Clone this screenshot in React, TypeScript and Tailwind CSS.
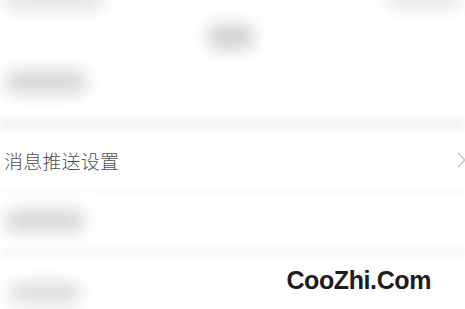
const Blur = ({ className }: { className: string }) => (
  <div className={`rounded-md bg-[#bdbdbd] blur-[9px] ${className}`} />
);

export default function App() {
  return (
    <div className="relative h-[309px] w-[465px] overflow-hidden bg-white font-['Noto_Sans_CJK_SC',sans-serif]">
      {/* blurred header area */}
      <div className="relative h-[118px] bg-white">
        <div className="flex items-start justify-between px-[4px]">
          <Blur className="mt-[-8px] h-[16px] w-[100px] opacity-50" />
          <Blur className="mt-[-8px] h-[16px] w-[75px] opacity-40" />
        </div>
        <div className="flex justify-center pt-[18px] pr-[4px]">
          <Blur className="h-[22px] w-[44px] opacity-80" />
        </div>
        <div className="px-[6px] pt-[24px]">
          <Blur className="h-[20px] w-[80px] opacity-70" />
        </div>
      </div>
      <div className="h-[12px] bg-[#f5f5f5] blur-[3px]" />

      {/* sharp row */}
      <div className="flex h-[60px] items-center justify-between bg-white pl-[4px]">
        <span className="text-[19px] font-light leading-none tracking-[0.2px] text-[#4f4f4f]">消息推送设置</span>
        <svg width="10" height="16" viewBox="0 0 10 16" className="mr-[-2px]">
          <path d="M1 1l7 7-7 7" fill="none" stroke="#c8c8c8" strokeWidth="1.5" />
        </svg>
      </div>
      <div className="h-[3px] bg-[#f8f8f8] blur-[2px]" />

      {/* blurred rows */}
      <div className="flex h-[55px] items-center px-[6px]">
        <Blur className="h-[20px] w-[78px] opacity-70" />
      </div>
      <div className="h-[8px] bg-[#f6f6f6] blur-[3px]" />
      <div className="flex h-[53px] items-center px-[10px]">
        <Blur className="mt-[20px] h-[18px] w-[70px] opacity-60" />
      </div>

      {/* watermark */}
      <div className="absolute left-[98px] top-[261px] flex h-[40px] w-[357px] items-center justify-end bg-white pr-[24px]">
        <span className="font-['Liberation_Sans',sans-serif] text-[25px] font-bold tracking-[-0.4px] text-[#1c1c1c]">
          CooZhi.Com
        </span>
      </div>
    </div>
  );
}
